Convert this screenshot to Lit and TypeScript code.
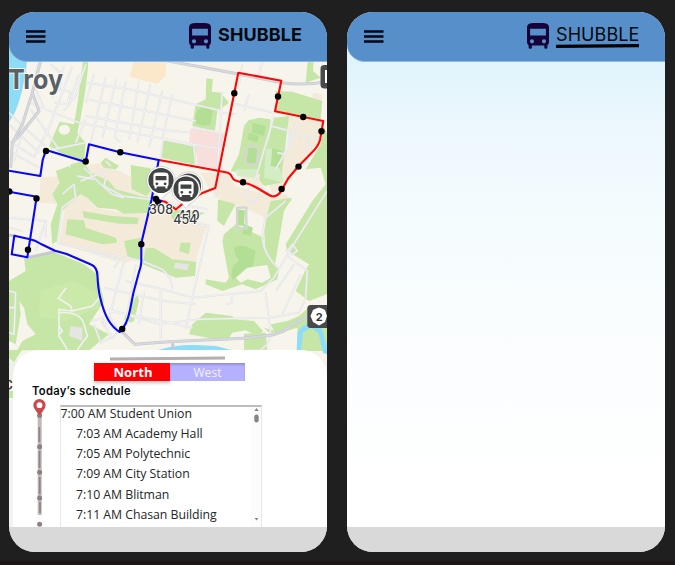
import { LitElement, html, css, svg } from "lit";
import { customElement, property } from "lit/decorators.js";

const BUS = "M3 0.5C6 -0.3 16 -0.3 19 0.5Q22 1.4 22 5V19Q22 21.4 20.4 22.3V24.4Q20.4 25.8 18.9 25.8Q17.3 25.8 17.3 24.4V22.6H4.9V24.4Q4.9 25.8 3.3 25.8Q1.6 25.8 1.6 24.4V22.3Q0 21.4 0 19V5Q0 1.4 3 0.5ZM3.1 5.8V12.4H18.9V5.8ZM5 16.2A2.1 2.1 0 1 0 5 20.4A2.1 2.1 0 1 0 5 16.2ZM17 16.2A2.1 2.1 0 1 0 17 20.4A2.1 2.1 0 1 0 17 16.2Z";

// Terrain and streets are drawn at three units per pixel.
const BEIGE = [
  "M122 348L150 345L152 430L90 425L95 350Z",
  "M240 312L280 306L360 345L432 352L428 410L330 392L290 380L262 365L232 372L210 345Z",
  "M170 425L225 400L260 440L345 455L410 452L398 590L350 605L150 550Z",
  "M415 425L470 440L530 470L595 490L560 600L500 600L470 590L440 560L400 590Z",
  "M575 335L650 335L680 375L790 405L770 470L680 430L640 420L600 385Z",
  "M835 165L940 180L935 245L860 330L820 380L790 400L770 330L840 250Z",
  "M775 415L830 400L850 420L800 450L790 480L760 500Z",
  "M912 95L940 100L935 135L910 120Z",
  "M690 330L745 300L765 350L760 395L700 370Z",
];
const PARKS = [
  "M222 0H238L236 30L228 95L215 170L205 215L230 245L225 300L180 290L130 262L120 255L152 182L195 190L205 130Z",
  "M140 330L180 315L200 350L190 420L160 450L145 540L130 550L125 490L145 430L130 400L152 365Z",
  "M185 310L222 300L245 335L300 360L320 385L395 405L425 410L422 455L345 458L320 445L265 440L235 410L215 400L185 425L175 370Z",
  "M275 305L290 290L330 315L320 325L285 320Z",
  "M365 312L425 322L430 385L412 405L368 385Z",
  "M592 52L612 55L608 92L635 95L660 125L625 150L618 210L550 195L560 130L590 115Z",
  "M462 238L560 255L560 312L455 290Z",
  "M718 178L750 170L785 175L765 340L700 335L665 330L690 280L705 195Z",
  "M800 90L850 92L940 120L935 175L800 150Z",
  "M795 170L840 165L815 365L765 375L750 355Z",
  "M896 0H914L912 30L935 50L890 65Z",
  "M945 195L954 220V700L900 720L860 690L888 630L900 610L835 570L830 550L910 420L950 370L935 320L890 325L935 250Z",
  "M627 415L680 430L655 475L645 495L625 480Z",
  "M785 420L850 410L825 450L815 510L798 610L770 580L765 500Z",
  "M645 520L680 490L765 530L762 560L790 600L810 625L805 655L740 685L700 670L640 690L590 670V655L650 665L660 650L645 570L640 540Z",
  "M175 475L225 478L230 500L320 530L325 545L280 550L170 520Z",
  "M220 450L310 465L390 470L385 490L330 488L225 470Z",
  "M345 540L398 530L395 600L355 585Z",
  "M410 562L435 560L490 595L562 602L558 645L500 650L450 630L400 610Z",
  "M515 545L545 545L540 580L510 570Z",
  "M480 445L590 455L530 480L490 475Z",
  "M45 590L140 575L225 610L265 640L285 720L240 790L300 820L240 868H25L40 840L80 820L55 790L45 740L30 720L0 710V660L50 630Z",
  "M385 700L390 720L375 780L365 785L345 775L355 750Z",
  "M550 790L590 755L670 765L675 775L735 780L762 810L745 825L710 808L670 815L655 840L595 830L540 820Z",
  "M705 818L770 815L775 866L705 866Z",
  "M785 790L835 780L870 765L910 730L954 800V870H870L865 800L800 820Z",
  "M765 800L785 820L800 810Z",
  "M0 700L30 710L35 760L20 850L0 840Z",
];
const DEEP = [
  "M575 140Q600 125 610 150L605 190Q575 200 560 185Q555 150 575 140Z",
  "M730 185L770 195L765 225L730 215Z", "M720 215L750 225L745 245L715 235Z",
  "M790 262L820 270L812 320L785 315Z", "M705 490L732 500L725 525L700 518Z",
  "M675 560Q700 545 740 570Q735 610 720 650L670 655Q660 620 690 600L680 585Z",
  "M718 260L745 262L740 308L712 305Z", "M685 445L708 448L705 495L686 492Z",
];
const STREETS = [
  "M60 125L210 185L530 245L640 265", "M235 65L360 85L640 150", "M235 115L560 180", "M230 165L450 205L545 215", "M550 200L640 215",
  "M255 40L230 125", "M290 48L245 245", "M322 55L280 230", "M350 62L318 225Q322 240 335 240", "M390 60L360 235", "M425 70L385 245", "M460 90L420 260", "M490 100L460 235",
  "M65 145L150 265", "M85 10L75 75L105 140", "M125 10L160 40L150 90M130 110L165 15", "M190 15L135 160L110 225", "M230 10L200 105L165 150", "M150 85L185 92L175 130L135 125", "M210 40L185 115",
  "M0 155L45 200L110 255", "M0 190L90 275M0 240L80 290M45 200L15 300", "M110 270L230 245", "M75 290L130 180M0 270L90 320",
  "M200 245L230 175", "M225 320L270 365L310 400L345 410M280 335L215 360M205 345L255 355M160 400L195 370L200 410L160 440L145 550",
  "M280 325L290 350L285 375L340 405L420 415L595 445M305 315L290 300",
  "M0 470L110 480L80 570M0 500L40 510M110 480L110 530",
  "M145 545L300 580L400 600L460 625Q490 650 490 685M250 575L330 600L315 620M345 600L300 770M380 610L350 790",
  "M285 680L465 720L560 730M350 660L460 685L550 710L755 690L795 650L835 580L954 390",
  "M455 690V835M405 690L390 790M300 750L460 780L550 800M300 745L450 790L570 775L780 770L870 755L890 710L895 630L835 585",
  "M550 490L600 495L550 710L530 805M670 705V725L650 730M770 695L785 820M785 820L775 850L755 866",
  "M640 90L620 410M680 130L795 155M700 10L690 70M755 10L750 45M720 100L705 150",
  "M795 165L735 370L710 390L720 420L735 425L755 390M785 195L845 210L830 280L805 275M865 180L840 255L800 325M860 220L900 230L890 275",
  "M830 420L770 470L760 530Q765 580 805 620M835 570L850 550L865 570L850 580L830 565M875 640L820 760M855 610L800 690",
  "M760 0L752 45M630 155L680 160M555 255L560 310M455 290L462 235L560 255",
  "M0 690L20 695L15 820L0 815M0 740H15", "M255 790L275 845L305 830L280 770L250 780M300 765L330 810L310 830L275 780",
];
const TRAILS = ["M172 680L148 712L185 735L190 750L250 735L275 705M190 750L150 745V825L175 866M150 755Q215 750 225 790L235 825L205 866M150 795L160 810L150 820"];
const DOTS = [[46, 151], [85.7, 161.5], [120.3, 152.3], [36.5, 198.5], [9.3, 191.5], [28, 249.7], [141.3, 244.3], [122.2, 329],
  [234.3, 93.3], [278, 96.5], [303.2, 117], [321.5, 131.3], [298.5, 166.6], [281.6, 189], [243, 182.3], [156, 199], [158, 203]];

@customElement("bus-icon")
class BusIcon extends LitElement {
  static styles = css`:host{display:block;width:22px;height:26px}svg{display:block}.b{fill:#170338;fill-rule:evenodd}`;
  render() { return html`<svg width="22" height="26" viewBox="0 0 22 26"><path class="b" d=${BUS}></path></svg>`; }
}

@customElement("top-bar")
class TopBar extends LitElement {
  @property({ type: Boolean }) active = false;
  static styles = css`
    :host{display:flex;align-items:flex-start;height:49px;background:#568fca;border-bottom:1px solid #8fb7dd;border-bottom-left-radius:18px;position:relative;z-index:1}
    .menu{display:block;margin:18px 0 0 17px;width:20px;height:14px;flex:none}
    bus-icon{margin:11px 0 0 143px}
    .name{margin:10px 0 0 7px;font:700 18px/25px Inter,sans-serif;color:#05080c;letter-spacing:.1px}
    .plain{font-weight:400;letter-spacing:.08px}
    .wrap{display:flex;flex-direction:column}
    .rule{display:block;width:83px;height:4px;margin:-3px 0 0 7px}
  `;
  render() {
    return html`<svg class="menu" viewBox="0 0 20 14"><path d="M0 .3H19.5V2.7H0ZM0 5.3H19.5V7.7H0ZM0 10.3H19.5V12.7H0Z" fill="#020610"></path></svg><bus-icon></bus-icon>
      ${this.active
        ? html`<div class="wrap"><span class="name plain">SHUBBLE</span><svg class="rule" viewBox="0 0 83 4"><path d="M0 .8L83 0V3.2L0 4Z"></path></svg></div>`
        : html`<span class="name">SHUBBLE</span>`}`;
  }
}

@customElement("route-map")
class RouteMap extends LitElement {
  static styles = css`
    :host{display:block}svg{display:block}
    .land{fill:#f7f4eb}.park{fill:#c6e6a8}.deep{fill:#b3df95}.beige{fill:#f3ead9}.water{fill:#8fdcf7}
    .case{fill:none;stroke:#e1e2e5;stroke-width:6;stroke-linejoin:round}.lane{fill:none;stroke:#f1f2f4;stroke-width:3;stroke-linejoin:round}
    .trail{fill:none;stroke:#f1f1f0;stroke-width:5}
    .hwy{fill:none;stroke:#c6cacf;stroke-width:9;stroke-linejoin:round}.hwyin{fill:none;stroke:#d6d9dd;stroke-width:5}
    .blue,.red{fill:none;stroke:#0808f4;stroke-width:2.1;stroke-linejoin:round}.red{stroke:#fa0808}
    .track{fill:none;stroke:#d4d6d2;stroke-width:7}
    .town{font:700 27.5px Inter,sans-serif;fill:#5a6064;stroke:#fffc;stroke-width:2;paint-order:stroke}
    .id{font:500 12.5px Inter,sans-serif;fill:#37383a;stroke:#fff;stroke-width:1.6;paint-order:stroke;text-anchor:middle}
    .ring{fill:#fff;stroke:#8886;stroke-width:.8}.disc{fill:#414243}.glyph{fill:#fff;fill-rule:evenodd}
    .sign{fill:#49494b}.shield{fill:#fff}.num{font:700 11px Inter,sans-serif;fill:#333;text-anchor:middle}
  `;
  marker(x: number, y: number) {
    return svg`<g transform="translate(${x} ${y})"><path class="ring" d="M-8.5 11.5Q-3 14.5 0 19.5Q3 14.5 8.5 11.5A14.2 14.2 0 1 0 -8.5 11.5Z"></path><circle class="disc" r="12.6"></circle>
      <path class="glyph" transform="translate(-7.6 -8) scale(.69 .62)" d=${BUS}></path></g>`;
  }
  render() {
    return html`<svg width="318" height="358" viewBox="9 42 318 358">
      <rect class="land" x="9" y="42" width="318" height="358"></rect>
      <g transform="translate(9 61) scale(.33333)">
        ${BEIGE.map(d => svg`<path class="beige" d=${d}></path>`)}
        <path fill="#fbe7ca" d="M375 0H472L470 45L445 68L400 58L362 45Z"></path>
        <path fill="#f9dfdc" d="M545 202L645 218L627 325L565 312L560 255L540 250Z"></path>
        ${PARKS.map(d => svg`<path class="park" d=${d}></path>`)}
        <path fill="#cbeaaa" d="M95 690L190 660L270 700L270 740L165 780L90 765Z"></path>
        <path fill="#d3edc5" d="M770 262L795 265L825 365L765 350ZM680 325L745 325L740 352L685 345Z"></path>
        ${DEEP.map(d => svg`<path class="deep" d=${d}></path>`)}
        <ellipse class="land" cx="166" cy="206" rx="17" ry="15"></ellipse>
        <path class="land" d="M715 620L775 612L785 650L760 665L715 655L695 665L680 650Z"></path>
        <rect class="track" x="711" y="255" width="36" height="58" rx="16" transform="rotate(6 729 284)"></rect>
        <rect class="track" x="684" y="440" width="28" height="62"></rect>
        <path fill="#e5e5e2" d="M185 795L220 800L220 840L180 825ZM498 605L540 610L535 628L495 622Z"></path>
        <path class="water" d="M0 -57H55L54 0Q50 50 35 105Q20 160 0 182ZM450 866Q500 850 560 852L620 855L670 868V880H450ZM863 868L865 815Q885 780 920 790L940 805L954 860V880L942 875L928 815L905 800L882 815L876 868Z"></path>
        ${STREETS.map(d => svg`<path class="case" d=${d}></path>`)}
        ${STREETS.map(d => svg`<path class="lane" d=${d}></path>`)}
        ${TRAILS.map(d => svg`<path class="trail" d=${d}></path>`)}
        <path class="hwy" d="M95 0L70 95L90 150L30 225L10 245L5 320M70 95L40 190L10 245M450 -5L640 30L820 65Q880 75 954 62M0 522L20 526M55 590L138 572M335 808L378 850L480 842L700 832L790 822L825 810L850 790L910 762M490 842L493 866"></path>
        <path class="hwyin" d="M95 0L70 95L90 150L30 225L10 245L5 320M70 95L40 190L10 245M450 -5L640 30L820 65Q880 75 954 62M335 808L378 850L480 842L700 832L790 822L825 810L850 790L910 762"></path>
      </g>
      <rect fill="#edf0e8" x="9" y="350" width="8" height="30"></rect>
      <path class="park" d="M9 350H22L14 362L9 358ZM9 391H20V398H9Z"></path>
      <path d="M8 380.5Q11.5 380.5 11.5 383M11.5 386Q11.5 389 8 389" fill="none" stroke="#444" stroke-width="1.6"></path>
      <path class="red" d="M159 160L218 170.7L228 172.7Q231 174 232 177T237 181L243 182.5Q251 184 259 189T271.7 196.3Q278 197 281.7 190L288.3 178.3L298.7 166L311.7 152.7Q318 147 320 140L323.3 121L275 111.3L281.3 80.7L238.3 72.7L215.3 188L201.7 193.3L181.7 204.5L176 209.3L165 201.7L158 200"></path>
      <path class="blue" d="M9 170.8L40.3 176L42.7 160L46 150L85.7 162L89 144.3L120 152.3L158.7 160L151.5 200L141.3 243.3V262Q141 267 139 272L133.3 293.3L130 310Q127 325 119.8 332Q113 328 108.3 320T100 296.7Q98 288 97.5 276Q97.3 267 91 264.5L66.7 254L55 250.7L41 244Q35 240 29 239L14.3 235.7L11.7 254.3L27.3 257.3L36.7 196.7L9 191.7M152 197L162 201.5"></path>
      ${DOTS.map(p => svg`<circle cx=${p[0]} cy=${p[1]} r="3.2" fill="#030305"></circle>`)}
      ${this.marker(188.5, 186)}${this.marker(161, 180.5)}${this.marker(186, 189)}
      <text class="id" x="161" y="214.3" textLength="24">308</text>
      <text class="id" x="188.5" y="219.8" textLength="22">410</text>
      <text class="id" x="185.3" y="223.5" textLength="24">454</text>
      <text class="town" x="8" y="89" textLength="55" lengthAdjust="spacingAndGlyphs">Troy</text>
      <rect class="sign" x="320.5" y="65" width="14" height="23.5" rx="4"></rect><rect class="shield" x="325" y="70" width="6" height="13"></rect>
      <rect class="sign" x="307.3" y="305" width="26" height="23" rx="3.5"></rect>
      <path class="shield" d="M313 310L316 308.5L319 307.5L322 308.5L325 310L327 316L325 322L319 325.5L313 322L310.5 316Z"></path>
      <text class="num" x="319.3" y="320.6">2</text>
    </svg>`;
  }
}

@customElement("schedule-sheet")
class ScheduleSheet extends LitElement {
  static styles = css`
    :host{display:flex;flex-direction:column;box-sizing:border-box;height:177px;margin-left:4px;background:#fff;border-radius:26px 26px 0 0;overflow:hidden;position:relative}
    .grip{width:115px;height:3px;margin:7px 0 0 97px;background:#b6afae;flex:none;transform:rotate(-.4deg)}
    .tabs{display:flex;height:18px;margin:3px 0 0 81px;flex:none}
    .tab{width:75px;box-sizing:border-box;text-align:center;font:400 12px/20px "Open Sans",sans-serif;letter-spacing:.1px;color:#f4f2ff;background:#b5b1ff;box-shadow:inset 0 2px 2px #9691d6}
    .on{width:76px;padding-left:2px;background:#fd0004;color:#fff;font:700 13px/18px "Open Sans",sans-serif;letter-spacing:.1px;box-shadow:0 2px 3px #8888}
    .title{margin:3px 0 0 19px;font:600 11.2px/15px Inter,sans-serif;color:#08080b;letter-spacing:.3px;white-space:nowrap;flex:none}
    .body{display:flex;flex:none;margin-left:19px}
    .line{display:block;width:16px;height:130px;flex:none}
    .list{margin:6px 0 0 12px;width:202px;height:122px;box-sizing:border-box;border:1px solid #e8e8e8;border-top:2px solid #bdbdbd;border-bottom:0;display:flex;justify-content:space-between}
    .rows{display:flex;flex-direction:column}
    .row{font:400 12.3px/20.1px "Open Sans",sans-serif;color:#262626;padding-left:15px;white-space:nowrap;letter-spacing:-.04px;height:20.1px;position:relative;top:-2.8px}
    .row:first-child{padding-left:0;margin-left:-.5px}
    .bar{width:10px;height:120px;background:#fcfcfc;display:block}
  `;
  render() {
    const rows = ["7:00 AM Student Union", "7:03 AM Academy Hall", "7:05 AM Polytechnic", "7:09 AM City Station", "7:10 AM Blitman", "7:11 AM Chasan Building"];
    return html`<div class="grip"></div>
      <div class="tabs"><div class="tab on">North</div><div class="tab">West</div></div>
      <div class="title">Today’s schedule</div>
      <div class="body">
        <svg class="line" viewBox="32 399 16 130">
          <path d="M39.7 413V515" stroke="#c1b8b7" stroke-width="4"></path>
          <path d="M39.3 427V442M39.5 451V468M39.7 477V494M40 502V513" stroke="#8f8586" stroke-width="1.8"></path>
          ${[415.5, 446.7, 472.3, 498, 524.3].map(y => svg`<circle cx="39.6" cy=${y} r="2.5" fill="#8b8182"></circle>`)}
          <path fill="#cb4a4d" fill-rule="evenodd" d="M39.5 415.5Q33.3 408.5 33.3 405.2A6.1 6.1 0 0 1 45.6 405.2Q45.6 408.5 39.5 415.5ZM39.5 402.3A2.9 2.9 0 1 0 39.5 408.1A2.9 2.9 0 1 0 39.5 402.3Z"></path>
        </svg>
        <div class="list"><div class="rows">${rows.map(r => html`<div class="row">${r}</div>`)}</div>
          <svg class="bar" viewBox="0 0 10 120"><path fill="#858585" d="M3.3 4L5.5 1L7.7 4ZM3.5 111H7.5L5.5 113.5Z"></path><rect x="3.3" y="7.5" width="4.4" height="8" rx="2.2" fill="#858585"></rect></svg>
        </div>
      </div>`;
  }
}

@customElement("app-root")
class AppRoot extends LitElement {
  static styles = css`
    :host{display:flex;box-sizing:border-box;width:675px;height:565px;padding:12px 10px 0 9px;gap:20px;background:#1f1f1f;border-bottom:4px solid #1c1617;overflow:hidden}
    .phone{width:318px;height:540px;border-radius:26px;overflow:hidden;display:flex;flex-direction:column;background:#fff;flex:none}
    .home{background:#f3f3f3}
    .blank{background:linear-gradient(#e0f4fc 48px,#edf8fd 120px,#f5fcfe 220px,#fbfdfe 340px,#fff 490px)}
    route-map{margin-top:-20px;height:358px;flex:none}
    schedule-sheet{margin-top:-50px;flex:none}
    .foot{height:25px;background:#d9d9d9;flex:none;margin-top:auto}
  `;
  render() {
    return html`<div class="phone home"><top-bar></top-bar><route-map></route-map><schedule-sheet></schedule-sheet><div class="foot"></div></div>
      <div class="phone blank"><top-bar active></top-bar><div class="foot"></div></div>`;
  }
}
